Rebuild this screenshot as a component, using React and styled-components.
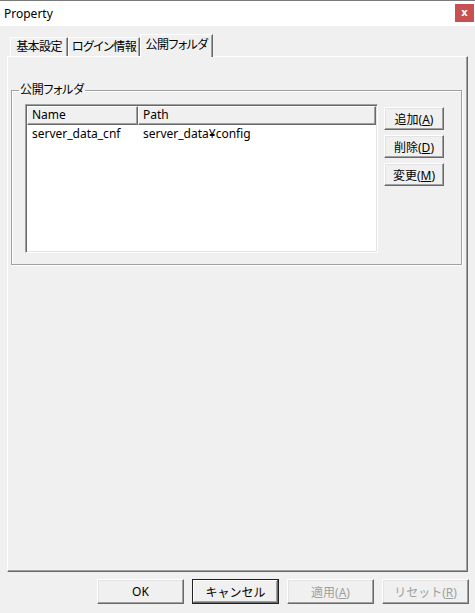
import React from "react";
import styled, { createGlobalStyle, css } from "styled-components";

const GlobalStyle = createGlobalStyle`
  html, body {
    margin: 0;
    padding: 0;
    background: #f0f0f0;
  }
  body {
    font-family: "Noto Sans", "Noto Sans CJK JP", sans-serif;
    font-size: 12px;
    color: #000;
    font-feature-settings: "palt";
  }
  * {
    box-sizing: border-box;
  }
`;

const App = () => {
  return (
    <>
      <GlobalStyle />
      <Window>
        <TitleBar>
          <Title>Property</Title>
          <CloseButton>x</CloseButton>
        </TitleBar>
        <Body>
          <TabStrip>
            <Tab $width={58}>基本設定</Tab>
            <Tab $width={72}>ログイン情報</Tab>
            <Tab $width={73} $active>
              公開フォルダ
            </Tab>
          </TabStrip>
          <Panel>
            <GroupBox>
              <Legend>公開フォルダ</Legend>
              <ListView>
                <ListHeader>
                  <HeaderCell>Name</HeaderCell>
                  <HeaderCell>Path</HeaderCell>
                </ListHeader>
                <ListRow>
                  <Cell>server_data_cnf</Cell>
                  <Cell>server_data¥config</Cell>
                </ListRow>
              </ListView>
              <SideButtons>
                <SideButton>
                  追加(<u>A</u>)
                </SideButton>
                <SideButton>
                  削除(<u>D</u>)
                </SideButton>
                <SideButton>
                  変更(<u>M</u>)
                </SideButton>
              </SideButtons>
            </GroupBox>
          </Panel>
        </Body>
        <Footer>
          <DialogButton>OK</DialogButton>
          <DialogButton $default>キャンセル</DialogButton>
          <DialogButton disabled>
            適用(<u>A</u>)
          </DialogButton>
          <DialogButton disabled>
            リセット(<u>R</u>)
          </DialogButton>
        </Footer>
      </Window>
    </>
  );
};

export default App;

const Window = styled.div`
  width: 475px;
  height: 613px;
  display: flex;
  flex-direction: column;
  background: #f0f0f0;
  overflow: hidden;
`;

const TitleBar = styled.div`
  height: 26px;
  flex: none;
  border-top: 1px solid #7a7a7a;
  background: #fff;
  display: flex;
  align-items: center;
  justify-content: space-between;
  padding-left: 4px;
  padding-right: 1px;
`;

const Title = styled.span`
  font-size: 12px;
  line-height: 16px;
`;

const CloseButton = styled.div`
  width: 19px;
  height: 18px;
  margin-top: -1px;
  background: #c75050;
  color: #fff;
  font-family: "DejaVu Sans", sans-serif;
  font-weight: bold;
  font-size: 10px;
  line-height: 17px;
  text-align: center;
`;

const Body = styled.div`
  flex: 1;
  display: flex;
  flex-direction: column;
  padding: 8px 7px 0 7px;
`;

const TabStrip = styled.div`
  height: 22px;
  display: flex;
  align-items: flex-end;
  padding-left: 3px;
  position: relative;
  z-index: 1;
`;

const Tab = styled.div`
  width: ${(p) => p.$width}px;
  height: 19px;
  line-height: 18px;
  text-align: center;
  letter-spacing: -0.6px;
  background: #f0f0f0;
  border-top: 1px solid #fff;
  border-left: 1px solid #fff;
  border-right: 1px solid #696969;
  box-shadow: inset -1px 0 0 #a0a0a0;
  white-space: nowrap;
  overflow: hidden;

  ${(p) =>
    p.$active &&
    css`
      height: 23px;
      margin-bottom: -1px;
      line-height: 20px;
    `}
`;

const Panel = styled.div`
  flex: 1;
  border-top: 1px solid #fff;
  border-left: 1px solid #fff;
  border-right: 1px solid #696969;
  border-bottom: 1px solid #696969;
  box-shadow: inset -1px -1px 0 #a0a0a0;
  padding: 0 5px 0 3px;
`;

const GroupBox = styled.fieldset`
  margin: 24px 0 0 0;
  min-width: 0;
  border: 1px solid #a0a0a0;
  box-shadow: 1px 1px 0 #fff, inset 1px 1px 0 #fff;
  padding: 5px 17px 11px 13px;
  display: flex;
  gap: 6px;
  align-items: flex-start;
`;

const Legend = styled.legend`
  padding: 0 1px;
  margin-left: -6px;
  line-height: 18px;
  letter-spacing: -0.3px;
`;

const ListView = styled.div`
  width: 353px;
  height: 149px;
  background: #fff;
  border-top: 1px solid #a0a0a0;
  border-left: 1px solid #a0a0a0;
  border-right: 1px solid #fff;
  border-bottom: 1px solid #fff;
  box-shadow: inset 1px 1px 0 #696969, inset -1px -1px 0 #e3e3e3;
  padding: 1px;
`;

const ListHeader = styled.div`
  display: grid;
  grid-template-columns: 111px 1fr;
  height: 19px;
`;

const HeaderCell = styled.div`
  background: #f0f0f0;
  border-top: 1px solid #fff;
  border-left: 1px solid #fff;
  border-right: 1px solid #696969;
  border-bottom: 1px solid #696969;
  box-shadow: inset -1px -1px 0 #a0a0a0;
  padding-left: 4px;
  line-height: 16px;
`;

const ListRow = styled.div`
  display: grid;
  grid-template-columns: 111px 1fr;
  height: 17px;
  align-items: center;
`;

const Cell = styled.div`
  padding-left: 5px;
  white-space: nowrap;
`;

const SideButtons = styled.div`
  display: flex;
  flex-direction: column;
  gap: 5px;
  margin-top: 3px;
`;

const raised = css`
  background: #f0f0f0;
  border-top: 1px solid #fff;
  border-left: 1px solid #fff;
  border-right: 1px solid #696969;
  border-bottom: 1px solid #696969;
  box-shadow: inset -1px -1px 0 #a0a0a0, inset 1px 1px 0 #e3e3e3;
  font-family: inherit;
  font-size: 12px;
  color: #000;
  padding: 0;
  white-space: nowrap;
`;

const SideButton = styled.button`
  ${raised}
  width: 60px;
  height: 23px;
`;

const Footer = styled.div`
  height: 41px;
  flex: none;
  display: flex;
  justify-content: flex-end;
  gap: 8px;
  padding: 7px 6px 0 0;
`;

const DialogButton = styled.button`
  ${raised}
  width: 87px;
  height: 25px;

  ${(p) =>
    p.$default &&
    css`
      border: 1px solid #222;
      box-shadow: inset -1px -1px 0 #696969, inset 1px 1px 0 #fff,
        inset -2px -2px 0 #a0a0a0;
    `}

  &:disabled {
    color: #a0a0a0;
  }
`;
